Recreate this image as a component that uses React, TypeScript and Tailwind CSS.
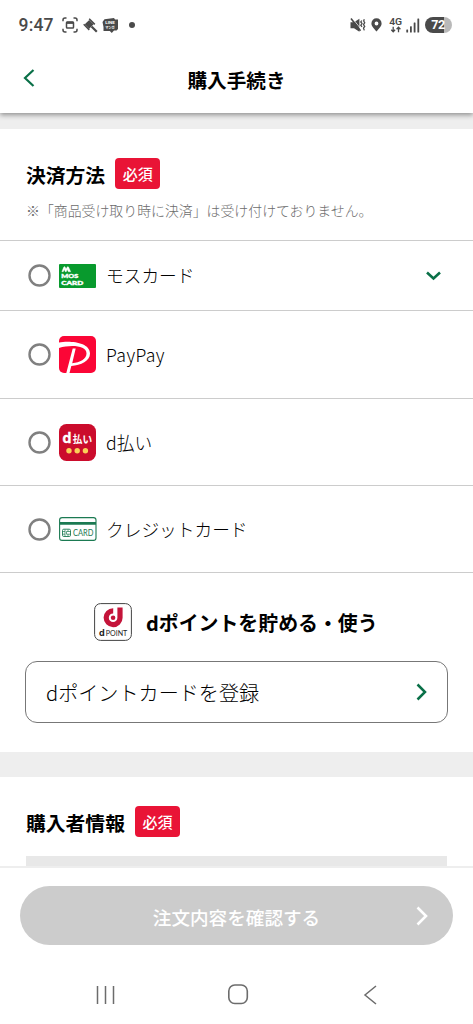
import React from "react";

interface PaymentMethod {
  id: string;
  label: string;
  labelClass?: string;
  height: string;
  logo: React.ReactNode;
  expandable?: boolean;
}

const StatusBar: React.FC = () => {
  return (
    <div className="z-20 flex h-[50px] shrink-0 items-center justify-between bg-white pr-[21px] pl-[18.5px] text-[#4a4a4a]">
      <div className="flex items-center">
        <span className="w-[37px] font-[Roboto,sans-serif] text-[17.5px] leading-5 font-medium tracking-[0.2px]">9:47</span>
        <svg width="16" height="16" viewBox="0 0 16 16" className="ml-[6.5px]" fill="none" stroke="currentColor" strokeWidth="1.5">
          <path d="M1 4.2V3q0-2 2-2h1.500M11.500 1H13q2 0 2 2v1.200M15 11.800V13q0 2-2 2h-1.500M4.500 15H3q-2 0-2-2v-1.200" />
          <rect x="4.500" y="5" width="7" height="6" rx="0.800" />
          <path d="M4.500 5.800h7" strokeWidth="2.200" />
        </svg>
        <svg width="15" height="15" viewBox="0 0 15 15" className="ml-[5px]" fill="currentColor">
          <path d="M1.800 6.300 6.200 1.900 10.600 6.300 6.200 10.700z" />
          <path d="M6.200 0.800 11.800 6.400M0.700 6.300 6.300 11.900" stroke="currentColor" strokeWidth="1.500" />
          <path d="M8.500 8.500 13.800 13.800" stroke="currentColor" strokeWidth="2.200" />
        </svg>
        <svg width="17" height="17" viewBox="0 0 17 17" className="ml-[4px]" fill="currentColor">
          <path d="M2.500 2.200 12 1l1 1.500h3v9.500l-1.500 1.500-2.500 0-2.200 2.500-2-2H1.500V10L0.500 5z" />
          <g fill="#fff" fontWeight="700">
            <text x="3.200" y="7.300" fontSize="4.200" textLength="9.600" lengthAdjust="spacingAndGlyphs" fontFamily="Roboto, sans-serif">LINE</text>
            <text x="3.200" y="11.900" fontSize="3.800" textLength="9.600" lengthAdjust="spacingAndGlyphs" fontFamily="'Noto Sans CJK JP', sans-serif">マンガ</text>
          </g>
        </svg>
        <span className="ml-[9.5px] h-[6px] w-[6px] rounded-full bg-[#4a4a4a]" />
      </div>

      <div className="flex items-center">
        <svg width="16" height="15" viewBox="0 0 16 15" fill="currentColor">
          <path d="M0.500 4.300H4L9.400 0.800v13L4 10.200H0.500z" />
          <path d="M2.200 0 11.700 12" stroke="#fff" strokeWidth="0.800" />
          <path d="M1 0.600 10.500 12.800" stroke="currentColor" strokeWidth="1.600" />
          <path d="M11.800 2.500 10.800 4l1.200 1.600-1.200 1.600 1.200 1.600M14.300 1.300 13.700 3l1 1.800-1.200 1.800 1.200 1.800-1.200 1.800 0.800 2.200" fill="none" stroke="currentColor" strokeWidth="1.300" />
        </svg>
        <svg width="11" height="14" viewBox="0 0 11 14" className="ml-[5px]" fill="currentColor">
          <path fillRule="evenodd" d="M5.500 0.300a5.100 5.100 0 0 1 5.100 5.100C10.600 8.600 7.200 11 5.500 13.500 3.800 11 0.400 8.600 0.400 5.400A5.100 5.100 0 0 1 5.500 0.300zM5.500 3.600a1.900 1.900 0 1 0 0 3.800 1.900 1.900 0 0 0 0-3.800z" />
        </svg>
        <svg width="14" height="16" viewBox="0 0 14 16" className="ml-[7px]" fill="currentColor">
          <text x="0.200" y="7.600" fontSize="9.800" fontFamily="Roboto, sans-serif" fontWeight="600" textLength="13" lengthAdjust="spacingAndGlyphs">4G</text>
          <path d="M4.200 9.800v5M2.300 12.800l1.900 2 1.900-2M9.500 15.300v-5M7.600 12.300l1.900-2 1.900 2" fill="none" stroke="currentColor" strokeWidth="1.300" />
        </svg>
        <svg width="14" height="15" viewBox="0 0 14 15" className="ml-[3px]" fill="currentColor">
          <rect x="0.300" y="11.500" width="1.800" height="3" rx="0.500" />
          <rect x="4" y="8.200" width="1.800" height="6.300" rx="0.500" />
          <rect x="7.700" y="4.600" width="1.800" height="9.900" rx="0.500" />
          <rect x="11.400" y="0.500" width="1.800" height="14" rx="0.500" />
        </svg>
        <div className="ml-[5px] flex h-4 w-[27px] items-center justify-center rounded-full bg-linear-to-r from-[#4a4a4a] from-72% to-[#b9b9b9] to-72% pr-px font-[Roboto,sans-serif] text-[12.5px] leading-4 font-bold tracking-[-0.5px] text-white">
          72
        </div>
      </div>
    </div>
  );
};

const MosLogo = () => (
  <svg width="37" height="24" viewBox="0 0 37 24">
    <rect width="37" height="24" rx="1" fill="#089a2d" />
    <path d="M2.800 7.800 4.600 3.200Q5.500 1.800 6.300 3.200L7 4.700 8 3.200Q8.900 1.800 9.700 3.200L11.800 7.800H9.300L8.200 5.600 7.300 7.800H6.200L5.300 5.600 4.300 7.800z" fill="#fff" stroke="#fff" strokeWidth="0.300" />
    <g fill="#fff" stroke="#fff" strokeWidth="0.400" fontFamily="Lato, sans-serif" fontWeight="900" fontSize="6.400">
      <text x="2.300" y="13.800" textLength="17" lengthAdjust="spacingAndGlyphs">MOS</text>
      <text x="2.300" y="21" textLength="22" lengthAdjust="spacingAndGlyphs">CARD</text>
    </g>
  </svg>
);

const PayPayLogo = () => (
  <svg width="37" height="37" viewBox="0 0 37 37">
    <rect width="37" height="37" rx="5" fill="#fb0636" />
    <path
      fillRule="evenodd"
      fill="#fff"
      d="M0 6.500C10 4.500 31 5.800 31 17.500 31 25 22 29.500 12.300 29.900L10.500 37H7.300L13.700 12.500H16.700L13.200 27.300C21 26.500 27.500 23 27.500 17.500 27.500 9.500 12 8.500 0 12z"
    />
  </svg>
);

const DPayLogo = () => (
  <svg width="37" height="37" viewBox="0 0 37 37">
    <rect width="37" height="37" rx="7.500" fill="#cb0c2c" />
    <text x="3.600" y="19.300" fontSize="14" fontWeight="700" fill="#fff" stroke="#fff" strokeWidth="0.300" fontFamily="Inter, sans-serif">d</text>
    <text x="13.800" y="19" fontSize="9.700" fontWeight="700" fill="#fff" fontFamily="'Noto Sans CJK JP', sans-serif">払い</text>
    <g fill="#fbcf58">
      <circle cx="10" cy="26.800" r="2.700" />
      <circle cx="18.200" cy="26.800" r="2.700" />
      <circle cx="26.400" cy="26.800" r="2.700" />
    </g>
  </svg>
);

const CreditCardLogo = () => (
  <svg width="38" height="24" viewBox="0 0 38 24" fill="none" stroke="#1b7a52">
    <rect x="0.600" y="0.600" width="36.400" height="22.800" rx="2.500" strokeWidth="1.100" />
    <path d="M1 6.300H37" strokeWidth="2.800" />
    <rect x="3.500" y="12.200" width="8" height="7.300" rx="1.300" strokeWidth="0.900" />
    <path d="M3.500 14.500H6M3.500 17.200H6M6 12.500V19.500M9 12.500V14.500H7.500V17.200H9V19.500M9 14.500H11.500M9 17.200H11.500" strokeWidth="0.700" />
    <text x="14" y="19" fontSize="8.500" textLength="20.500" lengthAdjust="spacingAndGlyphs" fill="#1b7a52" stroke="none" fontFamily="Lato, sans-serif">CARD</text>
  </svg>
);

const DPointLogo = () => (
  <svg width="38" height="38" viewBox="0 0 38 38">
    <rect x="0.600" y="0.600" width="36.800" height="36.800" rx="6" fill="#fff" stroke="#444" strokeWidth="1" />
    <path d="M19.200 7.800A6.900 6.900 0 1 0 26 14.700V4.500" fill="none" stroke="#c4143a" strokeWidth="5.200" />
    <circle cx="19.100" cy="14.700" r="2.300" fill="#c4143a" />
    <text x="5" y="32.800" fontSize="9" fontWeight="700" fill="#222" fontFamily="Inter, sans-serif">d</text>
    <text x="11.800" y="32.800" fontSize="7" textLength="21.500" lengthAdjust="spacingAndGlyphs" fill="#222" fontFamily="Lato, sans-serif">POINT</text>
  </svg>
);

const paymentMethods: PaymentMethod[] = [
  { id: "mos", label: "モスカード", height: "h-[70px]", logo: <MosLogo />, expandable: true },
  { id: "paypay", label: "PayPay", labelClass: "tracking-[0.4px]", height: "h-[88px]", logo: <PayPayLogo /> },
  { id: "dpay", label: "d払い", height: "h-[87px]", logo: <DPayLogo /> },
  { id: "credit", label: "クレジットカード", height: "h-[87px]", logo: <CreditCardLogo /> },
];

const RequiredBadge = () => (
  <span className="flex h-[31px] w-[45px] items-center justify-center rounded-[4px] bg-[#e91436] pt-px text-[15px] leading-5 font-medium text-white">
    必須
  </span>
);

const App: React.FC = () => {
  return (
    <div className="flex h-[1024px] w-full flex-col overflow-hidden bg-white font-['Noto_Sans_CJK_JP',sans-serif] text-black">
      <StatusBar />

      <header className="z-10 grid h-[63px] shrink-0 grid-cols-[60px_1fr_60px] items-center bg-white pb-1 shadow-[0_2px_5px_rgba(0,0,0,0.4)]">
        <button type="button" className="-mt-1 pl-[23px]">
          <svg width="12" height="18" viewBox="0 0 12 18" fill="none" stroke="#0a7048" strokeWidth="2.200">
            <path d="M10.500 1 2 9l8.500 8" />
          </svg>
        </button>
        <h1 className="text-center text-[19.6px] leading-7 font-bold">購入手続き</h1>
      </header>
      <div className="h-4 shrink-0 bg-[#eeeeee]" />

      {/* Payment methods */}
      <section className="shrink-0">
        <div className="h-[111px] px-[26px] pt-[29px]">
          <div className="flex items-center gap-[10px]">
            <h2 className="pt-[2px] text-[19.8px] leading-7 font-bold">決済方法</h2>
            <RequiredBadge />
          </div>
          <p className="mt-[11px] text-[13.9px] leading-5 font-light whitespace-nowrap text-[#6c6c6c]">
            ※「商品受け取り時に決済」は受け付けておりません。
          </p>
        </div>
        <ul>
          {paymentMethods.map((method) => (
            <li key={method.id} className={`flex items-center border-t border-[#cccccc] pr-[32px] pl-[28px] ${method.height}`}>
              <svg width="23" height="23" viewBox="0 0 23 23" fill="none" stroke="#808080" strokeWidth="2.400">
                <circle cx="11.500" cy="11.500" r="10" />
              </svg>
              <span className="ml-[8px] flex w-[47px]">{method.logo}</span>
              <span className={`grow pb-px text-[17.7px] leading-6 font-light ${method.labelClass ?? ""}`}>{method.label}</span>
              {method.expandable && (
                <svg width="15" height="10" viewBox="0 0 15 10" fill="none" stroke="#0a7048" strokeWidth="2.600">
                  <path d="M1 1.500 7.500 7.500 14 1.500" />
                </svg>
              )}
            </li>
          ))}
        </ul>
      </section>

      {/* d point */}
      <section className="h-[180px] shrink-0 border-t border-[#cccccc] px-[25px] pt-[30px]">
        <div className="flex items-center gap-[14px] pl-[69px]">
          <DPointLogo />
          <h2 className="pt-px text-[19.9px] leading-7 font-bold whitespace-nowrap">dポイントを貯める・使う</h2>
        </div>
        <button type="button" className="mt-[20px] flex h-[62px] w-full items-center justify-between rounded-[12px] border border-[#777777] pr-[20px] pl-[20px]">
          <span className="pt-[2px] text-[20.1px] leading-7 font-light">dポイントカードを登録</span>
          <svg width="12" height="18" viewBox="0 0 12 18" fill="none" stroke="#0a7048" strokeWidth="2.500">
            <path d="M2.500 1.500 10 9l-7.500 7.500" />
          </svg>
        </button>
      </section>
      <div className="h-[25px] shrink-0 bg-[#eeeeee]" />

      {/* Purchaser */}
      <section className="h-[89px] shrink-0 px-[26px] pt-[29px]">
        <div className="flex items-center gap-[10px]">
          <h2 className="pt-[2px] text-[19.8px] leading-7 font-bold">購入者情報</h2>
          <RequiredBadge />
        </div>
        <div className="mt-[19px] h-[11px] bg-[#e8e8e8]" />
      </section>

      <footer className="shrink-0 border-t-2 border-[#eeeeee] bg-white px-5 pt-[18px]">
        <button type="button" className="grid h-[59px] w-full grid-cols-[40px_1fr_40px] items-center rounded-full bg-[#cccccc] text-white">
          <span />
          <span className="pt-[2px] text-[18.6px] leading-7 font-medium">注文内容を確認する</span>
          <svg width="12" height="20" viewBox="0 0 12 20" fill="none" stroke="currentColor" strokeWidth="2.600" className="ml-[3px]">
            <path d="M1.500 1.500 10 10l-8.500 8.500" />
          </svg>
        </button>
      </footer>

      {/* System navigation */}
      <nav className="mt-[39px] grid h-5 shrink-0 grid-cols-[132px_132px_20px] items-center pl-[96px]">
        <svg width="20" height="20" viewBox="0 0 20 20" stroke="#6c6c6c" strokeWidth="1.500">
          <path d="M1.500 1v18M9.500 1v18M17.500 1v18" />
        </svg>
        <svg width="21" height="21" viewBox="0 0 21 21" fill="none" stroke="#6c6c6c" strokeWidth="1.600">
          <rect x="0.800" y="1" width="18.500" height="18.500" rx="6" />
        </svg>
        <svg width="17" height="20" viewBox="0 0 17 20" fill="none" stroke="#6c6c6c" strokeWidth="1.500">
          <path d="M16 1 5 10 16 19" />
        </svg>
      </nav>
    </div>
  );
};

export default App;
